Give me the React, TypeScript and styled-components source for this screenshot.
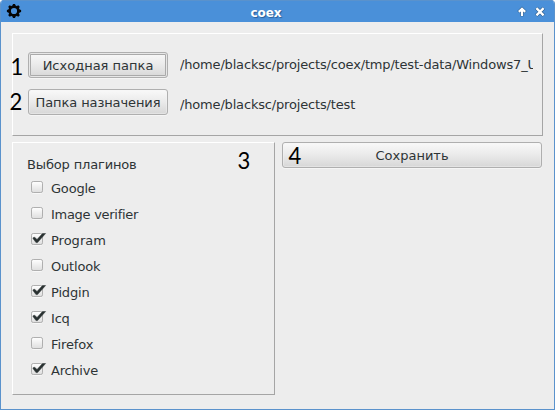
import React, { useState } from "react";
import styled, { createGlobalStyle } from "styled-components";

const GlobalStyle = createGlobalStyle`
  * { box-sizing: border-box; }
  body { margin: 0; background: #fff; overflow: hidden; }
`;

const Window = styled.main`
  position: relative;
  width: 555px;
  height: 410px;
  overflow: hidden;
  border: 1px solid #5a92cc;
  border-top: 0;
  border-radius: 4px 4px 0 0;
  background: #ededed;
  color: #2e3436;
  font: 13px/16px "DejaVu Sans", sans-serif;
`;

const TitleBar = styled.header`
  display: grid;
  grid-template-columns: 26px 1fr 38px;
  align-items: center;
  height: 22px;
  border-top: 1px solid #5a92cc;
  background: #4a90d9;
`;

const Title = styled.h1`
  margin: 3px 0 0 -11px;
  color: #fff;
  font-size: 12px;
  line-height: 16px;
  text-align: center;
  text-shadow: 1px 1px 1px #285d98;
`;

const WindowControls = styled.div`
  display: flex;
  padding: 1px 0 0 1px;
  svg { display: block; }
`;

const Body = styled.div`
  display: grid;
  grid-template-columns: 263px 260px;
  grid-template-rows: 103px 253px;
  gap: 6px 7px;
  padding: 11px 0 0 11px;
`;

const Panel = styled.section`
  border: 1px solid;
  border-color: #fff #a5a5a5 #a5a5a5 #fff;
`;

const PathPanel = styled(Panel)`
  grid-column: 1 / -1;
  width: 531px;
  padding: 18px 9px 0 15px;
`;

const PathRow = styled.div`
  display: grid;
  grid-template-columns: 140px 353px;
  column-gap: 12px;
  align-items: center;
  height: 26px;
  margin-bottom: 11px;
`;

const Button = styled.button<{ $focused?: boolean }>`
  width: 100%;
  height: 26px;
  padding: 1px 0 0;
  border: 1px solid #afafaf;
  border-radius: 3px;
  background: linear-gradient(#f9f9f9, #eaeaea 50%, #d7d7d7);
  box-shadow: 0 1px #f5f5f5${({ $focused }) =>
    $focused ? ", inset 0 0 0 1px #e7e7e7, inset 0 0 0 2px #aaa" : ", inset 0 0 0 1px #f4f4f466"};
  color: inherit;
  font: inherit;
  white-space: nowrap;
`;

const Caption = styled.span<{ $spacing: number }>`
  letter-spacing: ${({ $spacing }) => $spacing}px;
`;

const Path = styled.span<{ $drop: number }>`
  padding-top: ${({ $drop }) => $drop}px;
  overflow: hidden;
  white-space: nowrap;
  letter-spacing: -0.17px;
`;

const PluginPanel = styled(Panel)`
  padding: 14px 0 0 14px;
`;

const PluginTitle = styled.h2`
  margin: 0;
  font-size: 13px;
  font-weight: 400;
  line-height: 16px;
  letter-spacing: -0.15px;
`;

const PluginRow = styled.label`
  display: grid;
  grid-template-columns: 16px 1fr;
  column-gap: 4px;
  align-items: center;
  height: 26px;
  margin-left: 4px;
`;

const CheckInput = styled.input`
  position: absolute;
  opacity: 0;
  width: 12px;
  height: 12px;
  margin: 0;
`;

const Marker = styled.span<{ $x: number; $y: number }>`
  position: absolute;
  left: ${({ $x }) => $x}px;
  top: ${({ $y }) => $y}px;
  color: #000;
  font: 24px/28px Lato, sans-serif;
  transform: scaleX(0.92);
  pointer-events: none;
`;

const PluginList = styled.div`
  padding-top: 3px;
`;

const GearIcon = styled.svg`
  display: block;
  margin: -2px 0 0 5px;
`;

const CheckBox = styled.svg`
  display: block;
  margin-top: -4px;
`;

const plugins = [
  { name: "Google", enabled: false, spacing: -0.2 },
  { name: "Image verifier", enabled: false, spacing: -0.28 },
  { name: "Program", enabled: true, spacing: 0 },
  { name: "Outlook", enabled: false, spacing: -0.2 },
  { name: "Pidgin", enabled: true, spacing: -0.15 },
  { name: "Icq", enabled: true, spacing: -0.2 },
  { name: "Firefox", enabled: false, spacing: -0.1 },
  { name: "Archive", enabled: true, spacing: -0.25 },
];

function Plugin({ name, enabled, spacing }: { name: string; enabled: boolean; spacing: number }) {
  const [checked, setChecked] = useState(enabled);
  const gradientId = `face-${name}`.replace(" ", "-");
  return (
    <PluginRow>
      <CheckInput type="checkbox" checked={checked} onChange={() => setChecked(!checked)} />
      <CheckBox width="16" height="14" viewBox="0 0 16 14">
        <defs>
          <linearGradient id={gradientId} x1="0" y1="0" x2="0" y2="1">
            <stop stopColor="#fff" />
            <stop offset="1" stopColor="#dedede" />
          </linearGradient>
        </defs>
        <path d="M1.5 13.5h9" stroke="#f8f8f8" />
        <rect x=".5" y="1.5" width="11" height="11" rx="1.7" fill={`url(#${gradientId})`} stroke="#afafaf" />
        {checked && <path d="M2 5.8 3.7 5.2 6 7.5 11.5 1.5H14.6L6.5 10.6H5L2 6.6Z" fill="#293131" stroke="#293131" strokeWidth=".5" />}
      </CheckBox>
      <Caption $spacing={spacing}>{name}</Caption>
    </PluginRow>
  );
}

export default function App() {
  return (
    <>
      <GlobalStyle />
      <Window>
        <TitleBar>
          <GearIcon width="16" height="16" viewBox="0 0 16 16">
            <circle cx="8" cy="8" r="4.4" fill="none" stroke="#050505" strokeWidth="2.6" />
            <g fill="#050505">
              {[0, 45, 90, 135, 180, 225, 270, 315].map((angle) => (
                <path key={angle} d="M6.3 3 7 .9h2L9.7 3Z" transform={`rotate(${angle} 8 8)`} />
              ))}
            </g>
          </GearIcon>
          <Title>coex</Title>
          <WindowControls>
            <svg width="18" height="16" viewBox="0 0 18 16">
              <path d="M5 12.3V4.5M1.5 8.2 5 4.7l3.5 3.5" fill="none" stroke="#245788" strokeWidth="3.2" />
              <path d="M5 12V4.5M1.8 7.9 5 4.7l3.2 3.2" fill="none" stroke="#fff" strokeWidth="2.2" />
            </svg>
            <svg width="16" height="16" viewBox="0 0 16 16">
              <path d="m1.2 4 7.6 7.6m0-7.6-7.6 7.6" stroke="#245788" strokeWidth="3.6" />
              <path d="m1.4 4.2 7.2 7.2m0-7.2-7.2 7.2" stroke="#fff" strokeWidth="2.4" />
            </svg>
          </WindowControls>
        </TitleBar>
        <Body>
          <PathPanel>
            <PathRow>
              <Button $focused><Caption $spacing={0}>Исходная папка</Caption></Button>
              <Path $drop={0}>/home/blacksc/projects/coex/tmp/test-data/Windows7_U</Path>
            </PathRow>
            <PathRow>
              <Button><Caption $spacing={-0.1}>Папка назначения</Caption></Button>
              <Path $drop={5}>/home/blacksc/projects/test</Path>
            </PathRow>
          </PathPanel>
          <PluginPanel>
            <PluginTitle>Выбор плагинов</PluginTitle>
            <PluginList>
              {plugins.map((plugin) => <Plugin key={plugin.name} {...plugin} />)}
            </PluginList>
          </PluginPanel>
          <Button><Caption $spacing={0}>Сохранить</Caption></Button>
        </Body>
        <Marker $x={9} $y={52}>1</Marker>
        <Marker $x={8} $y={87}>2</Marker>
        <Marker $x={236} $y={146}>3</Marker>
        <Marker $x={287} $y={141}>4</Marker>
      </Window>
    </>
  );
}
